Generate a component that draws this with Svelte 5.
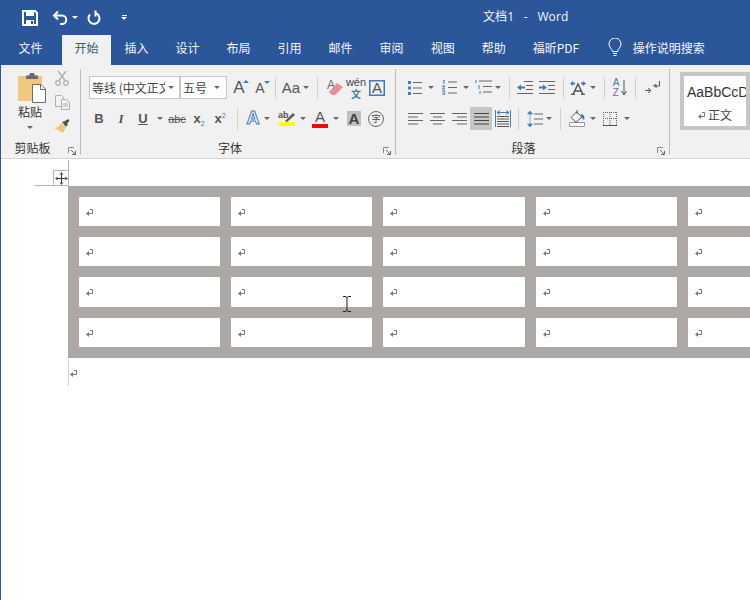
<script>
  const tabs = ['插入','设计','布局','引用','邮件','审阅','视图','帮助','福昕PDF'];
  const cols = 5;
  const rows = 4;
  const cells = Array.from({ length: cols * rows });
</script>

{#snippet caret(cls = 'w10')}
  <span class="slot {cls}"><i class="tri"></i></span>
{/snippet}
{#snippet ret()}
  <svg class="ret" width="7" height="7" viewBox="0 0 7 7"><path d="M4 .5h2.500v4H2" fill="none" stroke="#777"/><path d="M0 4.500L3 2v5z" fill="#777"/></svg>
{/snippet}
{#snippet launcher()}
  <svg class="launch" width="9" height="9" viewBox="0 0 9 9"><path d="M.5 6V.5H6" fill="none" stroke="#8a8a8a"/><path d="M3 3l4 4M7.500 4v3.500H4" fill="none" stroke="#666"/></svg>
{/snippet}

<div class="app">
  <header class="title">
    <div class="qat">
      <svg class="save" width="16" height="16" viewBox="0 0 16 16"><path d="M1 1h12l2 2v12H1z" fill="none" stroke="#fff" stroke-width="2"/><path d="M4 1h8v5H4zM4 10h8v5H4z" fill="#fff"/><path d="M9 11h2v3H9z" fill="#2b579a"/></svg>
      <svg class="undo" width="16" height="16" viewBox="0 0 16 16"><path d="M6 1.500L2 5.500l4 4M2.500 5.500H10a4 4 0 0 1 0 8.500H8" fill="none" stroke="#fff" stroke-width="2"/></svg>
      <i class="tri white undotri"></i>
      <svg class="redo" width="15" height="16" viewBox="0 0 15 16"><path d="M9 3.200A5.500 5.500 0 1 1 3 4.500" fill="none" stroke="#fff" stroke-width="2"/><path d="M7.500 .5h2v6h-2z" fill="#fff"/></svg>
      <span class="custom"><b></b><i class="tri white"></i></span>
    </div>
    <div class="doc">文档1 &nbsp;&nbsp;-&nbsp;&nbsp; Word</div>
  </header>

  <nav class="tabs">
    <span class="tab first">文件</span>
    <span class="tab active">开始</span>
    {#each tabs as t}<span class="tab">{t}</span>{/each}
    <svg class="bulb" width="14" height="20" viewBox="0 0 14 20"><path d="M4.500 13.500C4 10.500 1 9.500 1 6a6 6 0 0 1 12 0c0 3.500-3 4.500-3.500 7.500z" fill="none" stroke="#fff"/><path d="M5 15.500h4M5.500 17.500h3" stroke="#fff"/></svg>
    <span class="search">操作说明搜索</span>
  </nav>

  <section class="ribbon">
    <div class="group clip">
      <div class="clipbody">
        <div class="paste">
          <svg width="28" height="30" viewBox="0 0 28 30">
            <path d="M0 3h24v25H0z" fill="#efc77e"/>
            <path d="M8 2.500h3L12 0h4l1 2.500h3V6H8z" fill="#6b6b6b"/>
            <path d="M14.500 11.500h8.500l4.500 4.500v13.500h-13z" fill="#fff" stroke="#6d6d6d"/>
            <path d="M22.500 11.500v5h5" fill="none" stroke="#6d6d6d"/>
          </svg>
          <span class="pastetxt">粘贴</span>
          <i class="tri pastetri"></i>
        </div>
        <div class="cliptools">
          <svg width="14" height="15" viewBox="0 0 14 15"><path d="M3 0l7 9.500M11 0L4 9.500" stroke="#b0b0b0" stroke-width="1.500" fill="none"/><circle cx="3" cy="12" r="2.300" fill="none" stroke="#b0b0b0" stroke-width="1.200"/><circle cx="11" cy="12" r="2.300" fill="none" stroke="#b0b0b0" stroke-width="1.200"/></svg>
          <svg width="15" height="15" viewBox="0 0 15 15"><path d="M.5.500h6l2 2v9h-8z" fill="#f1f1f1" stroke="#b0b0b0"/><path d="M6.500 4.500h5l3 3v7h-8z" fill="#f1f1f1" stroke="#b0b0b0"/><path d="M8 9h5M8 11h5" stroke="#b0b0b0"/></svg>
          <svg width="16" height="14" viewBox="0 0 16 14"><path d="M11 2l3-2 1.500 2-3 2.500z" fill="#4a4a4a"/><path d="M8 3l3-1 3 3-2 3z" fill="#555"/><path d="M7 4l5 4-3 6-9-5 4-1z" fill="#efc77e"/></svg>
        </div>
      </div>
      <div class="glabel">剪贴板</div>
      {@render launcher()}
    </div>
    <span class="gsep"></span>

    <div class="group font">
      <div class="row r1">
        <div class="combo">
          <span class="cb name"><span class="cbt">等线 (中文正文)</span><i class="tri"></i></span>
          <span class="cb size"><span class="cbt">五号</span><i class="tri"></i></span>
        </div>
        <span class="slot w22 bigA ml1">A<i class="up"></i></span>
        <span class="slot w20 smallA">A<i class="dn"></i></span>
        <span class="sep ml5"></span>
        <span class="slot w22 aa ml4">Aa</span>
        {@render caret('w8')}
        <span class="sep ml7"></span>
        <span class="slot w22 ml6">
          <svg width="18" height="18" viewBox="0 0 18 18"><text x="1" y="10" class="svgA">A</text><path d="M3 13l8-9 6 4-8 8H6z" fill="#ec8b9c"/></svg>
        </span>
        <span class="slot w20 wen"><span>wén</span><em>文</em></span>
        <span class="slot w22"><span class="boxA">A</span></span>
      </div>
      <div class="row r2">
        <span class="slot w22 ti bold">B</span>
        <span class="slot w22 ti it">I</span>
        <span class="slot w22 ti un">U</span>
        {@render caret('w12')}
        <span class="slot w22 abc">abc</span>
        <span class="slot w22 ti"><span>x<sub>2</sub></span></span>
        <span class="slot w20 ti"><span>x<sup>2</sup></span></span>
        <span class="sep ml7"></span>
        <span class="slot w18 ml6 effA">A</span>
        {@render caret('w10')}
        <span class="slot w22 ml4">
          <svg width="18" height="17" viewBox="0 0 18 17"><text x="0" y="8" class="svgab">ab</text><path d="M7 11l8-8 2 2-8 7z" fill="#5a5a5a"/><rect x="1" y="12" width="16" height="4" fill="#ffff00"/></svg>
        </span>
        {@render caret('w10')}
        <span class="slot w20 ml2 colA">A<b></b></span>
        {@render caret('w12')}
        <span class="slot w24"><span class="shadeA">A</span></span>
        <span class="slot w20"><span class="zi">字</span></span>
      </div>
      <div class="glabel">字体</div>
      {@render launcher()}
    </div>
    <span class="gsep"></span>

    <div class="group para">
      <div class="row r1">
        <span class="slot w22"><svg width="14" height="14" viewBox="0 0 14 14"><path d="M5 1.500h9M5 7h9M5 12.500h9" stroke="#666"/><path d="M0 0h3v3H0zM0 5.500h3v3H0zM0 11h3v3H0z" fill="#3f7cb8"/></svg></span>
        {@render caret('w10')}
        <span class="slot w24 ml1"><svg width="15" height="15" viewBox="0 0 15 15"><path d="M6 2h9M6 7.500h9M6 13h9" stroke="#666"/><path d="M1 1l1-1v4M0 6h3L.5 9H3M0 11h3l-1 1.500L3 14H0" fill="none" stroke="#3f7cb8"/></svg></span>
        {@render caret('w10')}
        <span class="slot w20 ml2"><svg width="17" height="15" viewBox="0 0 17 15"><path d="M4 1h13M8 6.500h9M8 12h9" stroke="#666"/><path d="M1 0v3M4 5v4M5 11v3" stroke="#3f7cb8"/></svg></span>
        {@render caret('w10')}
        <span class="sep ml6"></span>
        <span class="slot w20 ml5"><svg width="16" height="13" viewBox="0 0 16 13"><path d="M7 .5h9M9 4.500h7M9 8.500h7M0 12.500h16" stroke="#666"/><path d="M0 6.500l4-3v2h4v2H4v2z" fill="#3f7cb8"/></svg></span>
        <span class="slot w20 ml2"><svg width="16" height="13" viewBox="0 0 16 13"><path d="M0 .5h16M9 4.500h7M9 8.500h7M0 12.500h16" stroke="#666"/><path d="M8 6.500l-4-3v2H0v2h4v2z" fill="#3f7cb8"/></svg></span>
        <span class="sep ml6"></span>
        <span class="slot w20 ml4"><svg width="16" height="14" viewBox="0 0 16 14"><path d="M0 2.500L3 0v1.500h2v2H3V5zM16 2.500L13 0v1.500h-2v2h2V5z" fill="#3f7cb8"/><path d="M3 13.500L8 3l5 10.500M1 13.500h4M11 13.500h4M5 10h6" fill="none" stroke="#555" stroke-width="1.500"/></svg></span>
        {@render caret('w10')}
        <span class="sep ml6"></span>
        <span class="slot w20 ml5 az"><span><u>A</u><u class="z">Z</u></span><svg width="6" height="16" viewBox="0 0 6 16"><path d="M3 0v15M.5 11L3 15l2.500-4" fill="none" stroke="#555"/></svg></span>
        <span class="sep ml5"></span>
        <span class="slot w20 ml6"><svg width="15" height="13" viewBox="0 0 15 13"><path d="M8 5l3-1.500V7M14.500 0v5H9" fill="none" stroke="#555"/><path d="M0 9.500h5M3 7l3 2.500L3 12" fill="none" stroke="#555"/></svg></span>
      </div>
      <div class="row r2">
        <span class="slot w22"><svg class="al" width="15" height="12" viewBox="0 0 15 12"><path d="M0 .5h15M0 4h10M0 7.500h15M0 11h10" stroke="#666"/></svg></span>
        <span class="slot w22"><svg class="al" width="15" height="12" viewBox="0 0 15 12"><path d="M0 .5h15M3 4h9M0 7.500h15M3 11h9" stroke="#666"/></svg></span>
        <span class="slot w22"><svg class="al" width="15" height="12" viewBox="0 0 15 12"><path d="M0 .5h15M5 4h10M0 7.500h15M5 11h10" stroke="#666"/></svg></span>
        <span class="slot w22 on"><svg class="al" width="15" height="12" viewBox="0 0 15 12"><path d="M0 .5h15M0 4h15M0 7.500h15M0 11h15" stroke="#444"/></svg></span>
        <span class="slot w22"><svg width="16" height="17" viewBox="0 0 16 17"><path d="M.5 0v17M15.500 0v17" stroke="#3f7cb8"/><path d="M2 2.500h12M5 .5l-3 2 3 2M11 .5l3 2-3 2" fill="none" stroke="#3f7cb8"/><path d="M2 6.500h12M2 9h12M2 11.500h12M2 14h12M2 16.500h12" stroke="#555"/></svg></span>
        <span class="sep ml4"></span>
        <span class="slot w20 ml6"><svg width="16" height="16" viewBox="0 0 16 16"><path d="M3 0L.5 3h5zM3 16L.5 13h5zM3 3v10" fill="#3f7cb8" stroke="#3f7cb8" stroke-width=".6"/><path d="M7 3h9M7 8h9M7 13h9" stroke="#666"/></svg></span>
        {@render caret('w8')}
        <span class="sep ml7"></span>
        <span class="slot w20 ml6"><svg width="16" height="17" viewBox="0 0 16 17"><path d="M2 7.500L7.500 2l5.500 5-6 5z" fill="#fff" stroke="#555"/><path d="M8 0v4" stroke="#555"/><path d="M12 4c3 .5 4 3 3 6-1.500-1-3-3-3-6z" fill="#3f7cb8"/><path d="M.5 12.500h15v4H.5z" fill="#fff" stroke="#999"/></svg></span>
        {@render caret('w12')}
        <span class="slot w22"><svg width="14" height="14" viewBox="0 0 14 14"><path d="M.5 0v13M7 0v13M13.500 0v13M0 .5h14M0 6.500h14" fill="none" stroke="#666" stroke-dasharray="1 1"/><path d="M0 13.500h14" stroke="#555"/></svg></span>
        {@render caret('w12')}
      </div>
      <div class="glabel">段落</div>
      {@render launcher()}
    </div>
    <span class="gsep"></span>

    <div class="styles">
      <div class="gallery">
        <div class="sample">AaBbCcDd</div>
        <div class="sname">{@render ret()}<span>正文</span></div>
      </div>
    </div>
  </section>

  <main class="page">
    <div class="marks">
      <span class="handle">
        <svg width="13" height="13" viewBox="0 0 13 13"><path d="M6.500 1v11M1 6.500h11" stroke="#333"/><path d="M6.500 0l2 2.500h-4zM6.500 13l2-2.500h-4zM0 6.500l2.500 2v-4zM13 6.500l-2.500 2v-4z" fill="#555"/></svg>
      </span>
    </div>
    <div class="table">
      {#each cells as _}<div class="cell">{@render ret()}</div>{/each}
    </div>
    <div class="after">{@render ret()}</div>
    <svg class="ibeam" width="8" height="16" viewBox="0 0 8 16"><path d="M0 .5h3l1 1 1-1h3M4 1v14M0 15.500h3l1-1 1 1h3" fill="none" stroke="#222"/></svg>
  </main>
</div>

<style>
  :global(body) { margin: 0; background: #fff; }
  .app {
    width: 750px; height: 600px; box-sizing: border-box; overflow: hidden; position: relative;
    border-left: 1px solid #2b579a;
    font-family: "Noto Sans CJK SC", "Liberation Sans", sans-serif;
    font-size: 12px; color: #444;
  }
  .title { height: 35px; background: #2b579a; display: flex; align-items: center; color: #f4f6fa; }
  .qat { display: flex; align-items: center; padding-left: 21px; width: 450px; flex: none; }
  .undo { margin-left: 14px; }
  .undotri { margin-left: 4px; }
  .redo { margin-left: 9px; }
  .custom { margin-left: 18px; display: flex; flex-direction: column; align-items: center; gap: 1px; width: 8px; }
  .custom b { width: 5px; height: 1px; background: #fff; }
  .doc { margin-left: 11px; padding-bottom: 3px; white-space: nowrap; font-family: "Open Sans", "Noto Sans CJK SC", sans-serif; font-size: 12px; letter-spacing: .1px; }

  .tabs { height: 30px; background: #2b579a; display: flex; align-items: stretch; color: #f4f6fa; }
  .tab { display: flex; align-items: center; justify-content: center; padding: 0 13.5px 5px; }
  .tab.first { margin-left: 4px; margin-right: 6px; }
  .tab.active { background: #f1f1f1; color: #2b579a; padding: 0 12.5px 5px; }
  .bulb { align-self: center; margin: -5px 0 0 15px; }
  .search { align-self: center; margin: -5px 0 0 11px; }

  .tri { display: inline-block; width: 0; height: 0; border: 3px solid transparent; border-top: 3px solid #666; border-bottom: 0; }
  .tri.white { border-top-color: #fff; }

  .ribbon { height: 93px; background: #f1f1f1; border-bottom: 1px solid #d5d5d5; display: flex; font-family: "Liberation Sans", "Noto Sans CJK SC", sans-serif; }
  .group { position: relative; flex: none; display: flex; flex-direction: column; padding-top: 11px; box-sizing: border-box; }
  .gsep { flex: none; width: 1px; background: #bdbdbd; margin: 4px 0 3px; }
  .clip { width: 79px; padding-top: 8px; }
  .font { width: 314px; }
  .para { width: 273px; }
  .glabel { position: absolute; left: 0; right: 0; top: 75px; text-align: center; line-height: 16px; color: #333; font-family: "Noto Sans CJK SC", sans-serif; }
  .clip .glabel { right: 16px; }
  .font .glabel { right: 16px; }
  .para .glabel { right: 18px; }
  .launch { position: absolute; right: 3px; bottom: 2px; }

  .clipbody { display: flex; }
  .paste { margin-left: 17px; width: 28px; display: flex; flex-direction: column; align-items: center; }
  .pastetxt { font-family: "Noto Sans CJK SC", sans-serif; line-height: 16px; margin: 1px 4px 0 0; color: #333; white-space: nowrap; }
  .pastetri { margin-top: 6px; margin-right: 4px; }
  .cliptools { margin-left: 8px; width: 16px; display: flex; flex-direction: column; align-items: center; gap: 9px; margin-top: -2px; }

  .row { display: flex; align-items: center; height: 23px; padding-left: 8px; }
  .r2 { margin-top: 8px; }
  .font .r2 { padding-left: 7px; }
  .slot { flex: none; height: 23px; display: inline-flex; align-items: center; justify-content: center; position: relative; }
  .w8 { width: 8px; } .w10 { width: 10px; } .w12 { width: 12px; } .w18 { width: 18px; }
  .w20 { width: 20px; } .w22 { width: 22px; } .w24 { width: 24px; }
  .ml1 { margin-left: 1px; } .ml2 { margin-left: 2px; } .ml4 { margin-left: 4px; } .ml5 { margin-left: 5px; }
  .ml6 { margin-left: 6px; } .ml7 { margin-left: 7px; }
  .sep { flex: none; width: 1px; height: 22px; background: #d0d0d0; }

  .combo { display: flex; width: 138px; height: 23px; flex: none; }
  .cb { box-sizing: border-box; height: 23px; background: #fff; border: 1px solid #c6c6c6; display: flex; align-items: center; font-family: "Noto Sans CJK SC", sans-serif; }
  .cb.name { width: 91px; padding: 0 5px 0 2px; }
  .cb.size { width: 47px; padding: 0 6px 0 2px; }
  .cbt { flex: 1; overflow: hidden; white-space: nowrap; margin-right: 3px; }

  .bigA { font-size: 17px; color: #555; }
  .smallA { font-size: 14px; color: #555; }
  .up, .dn { position: absolute; width: 0; height: 0; border: 3px solid transparent; right: 1px; }
  .up { border-bottom: 3px solid #3f7cb8; border-top: 0; top: 4px; }
  .dn { border-top: 3px solid #3f7cb8; border-bottom: 0; top: 5px; right: 0; }
  .aa { font-size: 15px; color: #555; }
  .svgA { font: 12px "Liberation Sans", sans-serif; fill: #666; }
  .svgab { font: bold 9px "Liberation Sans", sans-serif; fill: #555; }
  .wen { flex-direction: column; font-size: 11px; line-height: 11px; color: #444; }
  .wen em { font-style: normal; color: #3f7cb8; font-size: 10px; line-height: 11px; font-weight: bold; font-family: "Noto Sans CJK SC", sans-serif; }
  .boxA { box-sizing: border-box; width: 16px; height: 16px; border: 1px solid #3f7cb8; box-shadow: inset 0 0 0 .5px #3f7cb8; font-size: 15px; line-height: 14px; text-align: center; color: #555; }
  .ti { font-size: 13px; font-weight: bold; color: #555; }
  .ti sub, .ti sup { font-size: 7px; color: #3f7cb8; line-height: 0; font-weight: normal; }
  .ti sub { vertical-align: -3px; }
  .ti sup { vertical-align: 5px; }
  .it { font-style: italic; font-family: "Liberation Serif", serif; }
  .un { text-decoration: underline; }
  .abc { font-size: 11px; text-decoration: line-through; color: #555; }
  .effA { font-size: 18px; color: #fff; font-weight: bold; -webkit-text-stroke: 1px #3f7cb8; }
  .colA { font-size: 15px; color: #555; flex-direction: column; line-height: 15px; }
  .colA b { display: block; width: 16px; height: 4px; background: #ff0000; }
  .shadeA { width: 14px; height: 15px; background: #bfbfbf; color: #444; font-size: 15px; font-weight: bold; line-height: 15px; text-align: center; }
  .zi { box-sizing: border-box; width: 16px; height: 16px; border: 1px solid #666; border-radius: 50%; font-size: 9px; line-height: 14px; text-align: center; color: #444; font-family: "Noto Sans CJK SC", sans-serif; }
  .az { gap: 2px; }
  .az span { display: flex; flex-direction: column; font-size: 10px; line-height: 10px; }
  .az u { text-decoration: none; color: #3f7cb8; }
  .az u.z { color: #8a5aa8; }
  .on { background: #c6c6c6; }

  .styles { padding: 7px 0 0 10px; flex: none; }
  .gallery { box-sizing: border-box; width: 70px; height: 58px; border: 4px solid #c6c6c6; background: #fff; padding-top: 6px; overflow: hidden; }
  .sample { font-size: 14px; line-height: 20px; white-space: nowrap; color: #333; padding-left: 3px; overflow: hidden; }
  .sname { display: flex; align-items: center; justify-content: center; gap: 3px; margin-top: 6px; line-height: 14px; font-family: "Noto Sans CJK SC", sans-serif; color: #444; }

  .page { background: #fff; position: relative; height: 440px; padding-top: 1px; }
  .marks { margin-left: 34px; width: 33px; height: 25px; border-bottom: 1px solid #b4b4b4; border-right: 1px solid #b4b4b4; display: flex; align-items: flex-end; justify-content: flex-end; }
  .handle { box-sizing: border-box; width: 15px; height: 15px; border: 1px solid #b4b4b4; border-right: 0; border-bottom: 0; display: flex; align-items: center; justify-content: center; background: #fff; }
  .table { margin-left: 67px; width: 720px; box-sizing: border-box; background: #aca8a6; padding: 11px; display: grid; grid-template-columns: 141px 141px 142px 141px 141px; grid-template-rows: 29px 29px 30px 29px; gap: 11px; }
  .cell { background: #fff; padding: 12px 0 0 7px; }
  .ret { display: block; }
  .sname .ret { display: inline-block; }
  .after { margin: 1px 0 0 67px; height: 27px; width: 10px; box-sizing: border-box; border-left: 1px solid #d0d0d0; padding: 11px 0 0 1px; }
  .ibeam { position: absolute; left: 342px; top: 137px; }
</style>
